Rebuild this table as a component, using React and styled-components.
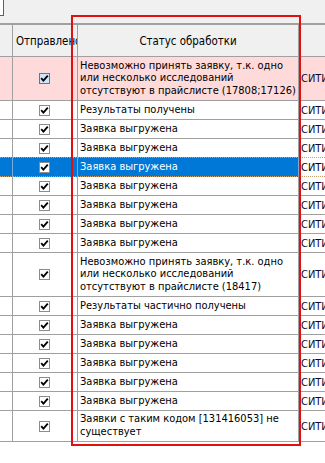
import React from 'react'
import styled, { createGlobalStyle } from 'styled-components'

const GlobalStyle = createGlobalStyle`
  html, body {
    margin: 0;
    padding: 0;
    background: #ffffff;
  }
  body {
    font-family: 'DejaVu Sans Condensed', 'Liberation Sans', sans-serif;
    font-size: 11px;
    color: #000;
  }
`

const rows = [
  { status: 'Невозможно принять заявку, т.к. одно\nили несколько исследований\nотсутствуют в прайслисте (17808;17126)', tall: 3, error: true },
  { status: 'Результаты получены' },
  { status: 'Заявка выгружена' },
  { status: 'Заявка выгружена' },
  { status: 'Заявка выгружена', selected: true },
  { status: 'Заявка выгружена' },
  { status: 'Заявка выгружена' },
  { status: 'Заявка выгружена' },
  { status: 'Заявка выгружена' },
  { status: 'Невозможно принять заявку, т.к. одно\nили несколько исследований\nотсутствуют в прайслисте (18417)', tall: 3 },
  { status: 'Результаты частично получены' },
  { status: 'Заявка выгружена' },
  { status: 'Заявка выгружена' },
  { status: 'Заявка выгружена' },
  { status: 'Заявка выгружена' },
  { status: 'Заявка выгружена' },
  { status: 'Заявки с таким кодом [131416053] не\nсуществует', tall: 2 },
]

const Page = styled.div`
  position: relative;
  width: 325px;
  height: 463px;
  overflow: hidden;
`

const TopBar = styled.div`
  height: 23px;
  background: #f0f0f0;
  border-bottom: 2px solid #a0a0a0;
`

const FocusBox = styled.div`
  width: 3px;
  height: 15px;
  background: #ffffff;
  border-right: 1px solid #0078d7;
  border-bottom: 1px solid #0078d7;
`

const Grid = styled.div`
  display: grid;
  grid-template-columns: 13px 65px 221px 60px;
`

const Cell = styled.div`
  box-sizing: border-box;
  border-right: 1px solid ${p => (p.$selected ? '#7aa9d6' : '#a0a0a0')};
  border-bottom: 1px solid #a0a0a0;
  height: ${p => p.$h}px;
  background: ${p => (p.$selected ? '#0078d7' : p.$error ? '#ffdada' : '#ffffff')};
  color: ${p => (p.$selected ? '#ffffff' : '#000000')};
  display: flex;
  align-items: center;
  overflow: hidden;
  white-space: nowrap;
  ${p => p.$selected && `
    border-top: 1px dotted #c8a070;
    border-bottom: 1px dotted #c8a070;
    margin-top: -1px;
    height: ${p.$h + 1}px;
  `}
`

const HeadCell = styled.div`
  box-sizing: border-box;
  height: 32px;
  background: #f0f0f0;
  border-right: 1px solid #a0a0a0;
  border-bottom: 1px solid #a0a0a0;
  display: flex;
  align-items: center;
  justify-content: ${p => (p.$center ? 'center' : 'flex-start')};
  padding-left: ${p => (p.$center ? 0 : 3)}px;
  padding-top: 1px;
  overflow: hidden;
  white-space: nowrap;
  font-size: 11.4px;
`

const CheckCell = styled(Cell)`
  justify-content: center;
  padding-right: 1px;
`

const StatusCell = styled(Cell)`
  padding-left: 2px;
  white-space: pre;
  line-height: 12.6px;
  font-size: 11px;
`

const LabCell = styled(Cell)`
  border-right: none;
  padding-left: 2px;
  font-size: 11px;
  color: ${p => (p.$selected ? '#000' : '#0a0a30')};
  background: ${p => (p.$error ? '#ffdada' : '#ffffff')};
`

const Box = styled.span`
  box-sizing: border-box;
  width: 11px;
  height: 11px;
  border: 1px solid ${p => (p.$hot ? '#1e88e5' : '#8c8c8c')};
  background: ${p => (p.$hot ? '#cce6fb' : '#ffffff')};
  display: flex;
  align-items: center;
  justify-content: center;
`

const Highlight = styled.div`
  position: absolute;
  left: 71px;
  top: 15px;
  width: 230px;
  height: 431px;
  box-sizing: border-box;
  border: 2px solid #e01010;
  pointer-events: none;
`

function Check({ hot }) {
  return (
    <Box $hot={hot}>
      <svg width="9" height="9" viewBox="0 0 9 9">
        <path d="M1.2 4.2 L3.4 6.6 L7.8 1.6" fill="none" stroke="#000" strokeWidth="1.8" />
      </svg>
    </Box>
  )
}

export default function App() {
  return (
    <Page>
      <GlobalStyle />
      <TopBar>
        <FocusBox />
      </TopBar>
      <Grid>
        <HeadCell />
        <HeadCell>Отправлено</HeadCell>
        <HeadCell $center>Статус обработки</HeadCell>
        <HeadCell />
        {rows.map((r, i) => {
          const h = r.tall === 3 ? 44 : r.tall === 2 ? 31 : 19
          return (
            <React.Fragment key={i}>
              <Cell $h={h} $error={r.error} $selected={r.selected} />
              <CheckCell $h={h} $error={r.error} $selected={r.selected}>
                <Check hot={r.error} />
              </CheckCell>
              <StatusCell $h={h} $error={r.error} $selected={r.selected}>
                {r.status}
              </StatusCell>
              <LabCell $h={h} $error={r.error} $selected={r.selected}>
                СИТИЛАБ
              </LabCell>
            </React.Fragment>
          )
        })}
      </Grid>
      <Highlight />
    </Page>
  )
}
